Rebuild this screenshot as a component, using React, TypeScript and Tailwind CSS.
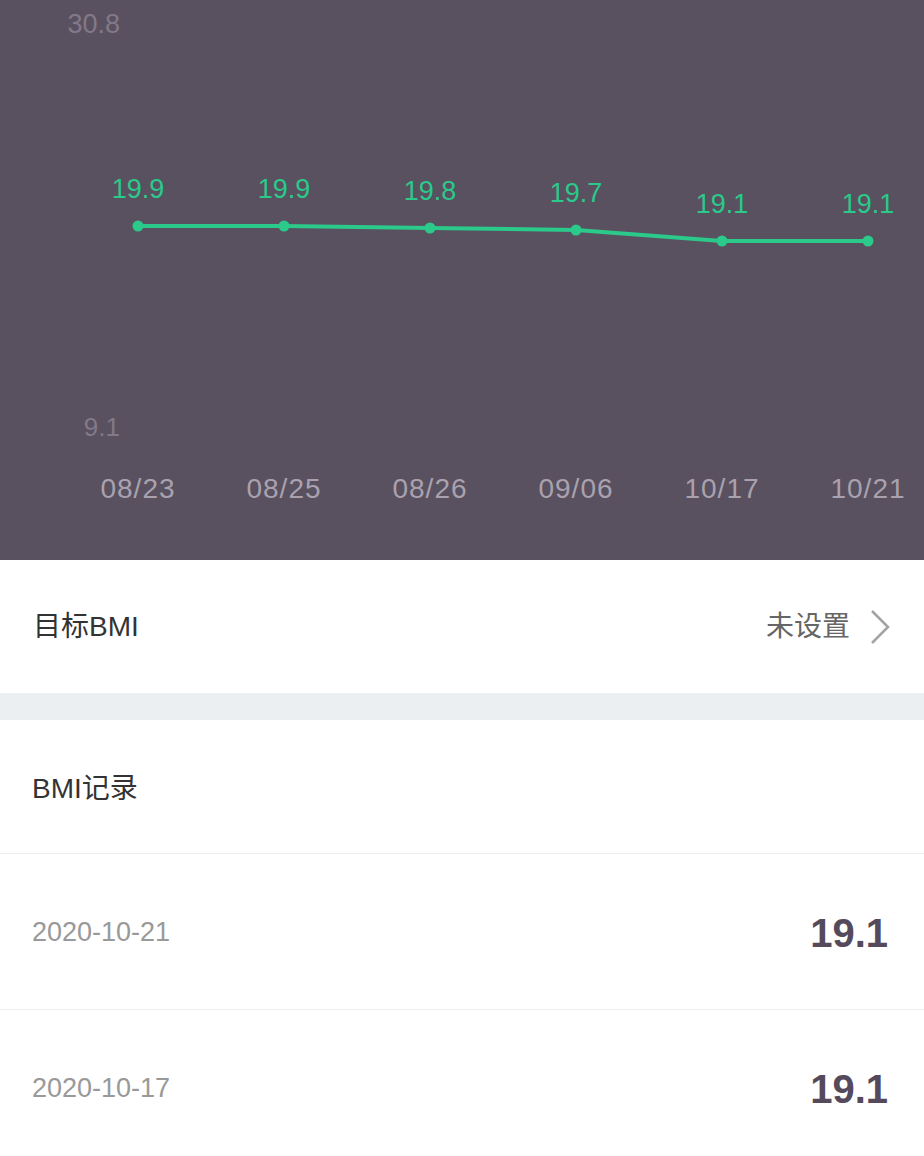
import React from 'react';

const points = [
  { x: 138, y: 226, v: '19.9', d: '08/23' },
  { x: 284, y: 226, v: '19.9', d: '08/25' },
  { x: 430, y: 228, v: '19.8', d: '08/26' },
  { x: 576, y: 230, v: '19.7', d: '09/06' },
  { x: 722, y: 241, v: '19.1', d: '10/17' },
  { x: 868, y: 241, v: '19.1', d: '10/21' },
];

const records = [
  { date: '2020-10-21', value: '19.1' },
  { date: '2020-10-17', value: '19.1' },
];

const font = '"Liberation Sans", "Noto Sans CJK SC", sans-serif';

const Chart: React.FC = () => {
  const line = points.map((p) => `${p.x},${p.y}`).join(' ');
  return (
    <div className="h-[560px] bg-[#595060]">
      <svg width="924" height="560" viewBox="0 0 924 560" style={{ fontFamily: font }}>
        <text x="120" y="33" textAnchor="end" fontSize="27" fill="#827989">30.8</text>
        <text x="120" y="436" textAnchor="end" fontSize="26" fill="#827989">9.1</text>
        <polyline points={line} fill="none" stroke="#2bc98a" strokeWidth="4" strokeLinejoin="round" />
        {points.map((p, i) => (
          <g key={i}>
            <circle cx={p.x} cy={p.y} r="5.5" fill="#2bc98a" />
            <text x={p.x} y={p.y - 28} textAnchor="middle" fontSize="27" fill="#2bc98a">{p.v}</text>
            <text x={p.x} y="498" textAnchor="middle" fontSize="28" letterSpacing="1" fill="#a9a2ae">{p.d}</text>
          </g>
        ))}
      </svg>
    </div>
  );
};

export default function App() {
  return (
    <div className="w-[924px] bg-white" style={{ fontFamily: font }}>
      <Chart />

      <div className="h-[133px] flex items-center justify-between pl-[33px] pr-[34px]">
        <span className="text-[28px] text-[#333333]">目标BMI</span>
        <div className="flex items-center gap-[20px]">
          <span className="text-[28px] text-[#666666]">未设置</span>
          <svg width="20" height="36" viewBox="0 0 20 36">
            <path d="M2 2 L18 18 L2 34" fill="none" stroke="#a3a3a3" strokeWidth="2.5" />
          </svg>
        </div>
      </div>

      <div className="h-[27px] bg-[#ebeff2]" />

      <div className="h-[134px] flex items-center pl-[32px] pt-[5px] border-b border-[#eeeeee]">
        <span className="text-[28px] text-[#333333]">BMI记录</span>
      </div>

      {records.map((r) => (
        <div key={r.date} className="h-[156px] flex items-center justify-between pl-[32px] pr-[36px] pt-[2px] border-b border-[#eeeeee]">
          <span className="text-[27px] text-[#999999]">{r.date}</span>
          <span className="text-[40px] font-bold text-[#554a5c]">{r.value}</span>
        </div>
      ))}
    </div>
  );
}
